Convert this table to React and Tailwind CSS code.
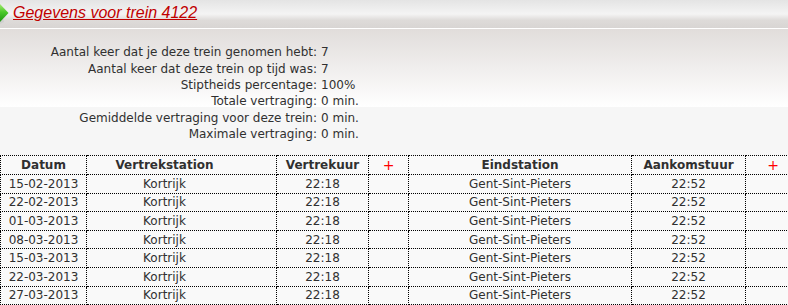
const stats = [
  ['Aantal keer dat je deze trein genomen hebt:', '7'],
  ['Aantal keer dat deze trein op tijd was:', '7'],
  ['Stiptheids percentage:', '100%'],
  ['Totale vertraging:', '0 min.'],
  ['Gemiddelde vertraging voor deze trein:', '0 min.'],
  ['Maximale vertraging:', '0 min.'],
];

const dates = ['15-02-2013', '22-02-2013', '01-03-2013', '08-03-2013', '15-03-2013', '22-03-2013', '27-03-2013'];

const cell = 'border border-dotted border-black text-center p-0 leading-none';
const station = cell + ' pr-[34px]';
const plus = cell + ' text-[#ff0000] font-normal text-[14px]';

function Arrow() {
  return (
    <svg width="10" height="22" viewBox="0 0 10 22" className="shrink-0">
      <defs>
        <linearGradient id="g" x1="0" y1="0" x2="0" y2="1">
          <stop offset="0" stopColor="#a6ea72" />
          <stop offset="0.45" stopColor="#4cc92a" />
          <stop offset="1" stopColor="#1e9512" />
        </linearGradient>
      </defs>
      <polygon points="0,3 4,19 0,21" fill="#cfcfcf" />
      <polygon points="0,1 8.5,10 0,19" fill="url(#g)" />
    </svg>
  );
}

export default function App() {
  return (
    <div className="w-[788px] h-[305px] overflow-hidden bg-[#f7f7f7] text-[#303030] font-['DejaVu_Sans',sans-serif] text-[12px]">
      <div className="h-[28px] flex items-center bg-[linear-gradient(to_bottom,#e4e4e4_0%,#f4f4f4_50%,#dedbd9_72%,#d8d5d3_100%)]">
        <Arrow />
        <a className="ml-[3px] -mt-[2px] text-[16px] italic underline text-[#c00000] font-['Liberation_Sans',Arial,sans-serif]">
          Gegevens voor trein 4122
        </a>
      </div>
      <div className="h-px bg-white" />
      <div className="bg-[linear-gradient(to_bottom,#e1dddb_0px,#ffffff_78px,#f6f6f6_78px)] pt-[15px] pb-[13px]">
        <table className="border-collapse">
          <tbody>
            {stats.map(([label, value]) => (
              <tr key={label} className="h-[16.4px]">
                <td className="w-[317px] text-right p-0 leading-none">{label}</td>
                <td className="pl-[4px] p-0 leading-none">{value}</td>
              </tr>
            ))}
          </tbody>
        </table>
      </div>
      <table className="table-fixed border-collapse w-[800px] bg-[#f9f9f9]">
        <colgroup>
          <col className="w-[86px]" />
          <col className="w-[190px]" />
          <col className="w-[92px]" />
          <col className="w-[40px]" />
          <col className="w-[223px]" />
          <col className="w-[114px]" />
          <col className="w-[55px]" />
        </colgroup>
        <thead>
          <tr className="h-[18.7px] font-bold">
            <th className={cell}>Datum</th>
            <th className={station}>Vertrekstation</th>
            <th className={cell}>Vertrekuur</th>
            <th className={plus}>+</th>
            <th className={cell}>Eindstation</th>
            <th className={cell}>Aankomstuur</th>
            <th className={plus}>+</th>
          </tr>
        </thead>
        <tbody>
          {dates.map((d) => (
            <tr key={d} className="h-[18.6px]">
              <td className={cell}>{d}</td>
              <td className={station}>Kortrijk</td>
              <td className={cell}>22:18</td>
              <td className={cell}></td>
              <td className={cell}>Gent-Sint-Pieters</td>
              <td className={cell}>22:52</td>
              <td className={cell}></td>
            </tr>
          ))}
        </tbody>
      </table>
    </div>
  );
}
